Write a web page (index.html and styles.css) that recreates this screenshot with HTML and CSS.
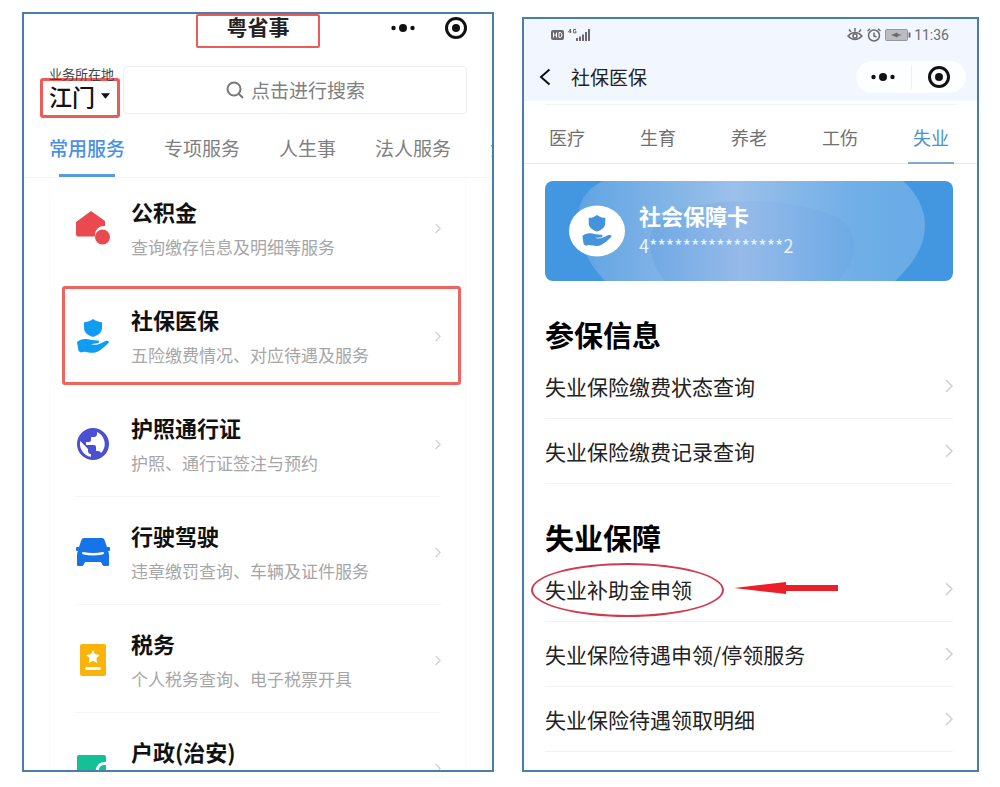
FILE: index.html
```html
<!DOCTYPE html>
<html lang="zh-CN">
<head>
<meta charset="utf-8">
<meta name="viewport" content="width=device-width, initial-scale=1">
<title>粤省事 - 社保医保</title>
<link rel="stylesheet" href="styles.css">
</head>
<body>
<svg class="defs" aria-hidden="true">
  <symbol id="hand" viewBox="0 0 36 36">
    <path d="M18 1c3 2.200 6 3 9 3.200V10c0 4.500-4 7.500-9 9-5-1.500-9-4.500-9-9V4.200C12 4 15 3.200 18 1z"/>
    <path d="M2 24c3-2.500 6-3.500 9.500-3 4 .6 6.500 1.500 11 1.500 2 0 2 2.300 0 2.800-2.500.6-5 .7-7 .7 3 1 7 .8 10-.6l4.500-2.200c2.500-1 5 .3 3.500 1.900-3.500 3.500-7 6.500-10.500 8.400-3 1.500-6 1.700-9.500.9-3-.7-5-1-7.500.1L3.500 33z"/>
  </symbol>
  <symbol id="chev" viewBox="0 0 8 14"><path d="M1 1l6 6-6 6" fill="none" stroke="currentColor" stroke-width="1.500"/></symbol>
  <symbol id="dots" viewBox="0 0 24 10"><circle cx="2.500" cy="5" r="2.200"/><circle cx="12" cy="5" r="4"/><circle cx="21.500" cy="5" r="2.200"/></symbol>
  <symbol id="target" viewBox="0 0 24 24"><circle cx="12" cy="12" r="9.500" fill="none" stroke="currentColor" stroke-width="3"/><circle cx="12" cy="12" r="4"/></symbol>
</svg>

<main class="board">
  <section class="phone home">
    <header class="home-head">
      <h1 class="home-title">粤省事</h1>
      <div class="home-capsule">
        <button type="button" aria-label="更多"><svg class="dots"><use href="#dots"/></svg></button>
        <button type="button" aria-label="关闭"><svg class="target"><use href="#target"/></svg></button>
      </div>
    </header>
    <div class="search-row">
      <div class="place">
        <span class="place-label" id="place-label">业务所在地</span>
        <button type="button" class="place-btn" aria-describedby="place-label">江门<svg class="caret" viewBox="0 0 10 6"><path d="M0 0h10L5 6z"/></svg></button>
      </div>
      <label class="search">
        <svg class="search-icon" viewBox="0 0 18 18"><circle cx="8" cy="8" r="6.500"/><path d="M12.500 12.500L17 17"/></svg>
        <input type="search" placeholder="点击进行搜索" aria-label="搜索">
      </label>
    </div>
    <nav class="home-tabs">
      <a href="#" class="on">常用服务</a>
      <a href="#">专项服务</a>
      <a href="#">人生事</a>
      <a href="#">法人服务</a>
      <a href="#">法</a>
    </nav>
    <ul class="services">
      <li><a href="#" class="service">
        <svg class="icon red" viewBox="0 0 36 36"><path d="M16 1l14 10v5a9 9 0 0 0-10 10.500H3a2 2 0 0 1-2-2V12z"/><circle cx="27.500" cy="27" r="7.500"/></svg>
        <span class="service-text"><strong>公积金</strong><small>查询缴存信息及明细等服务</small></span>
        <svg class="chev"><use href="#chev"/></svg></a></li>
      <li class="marked"><a href="#" class="service">
        <svg class="icon sky"><use href="#hand"/></svg>
        <span class="service-text"><strong>社保医保</strong><small>五险缴费情况、对应待遇及服务</small></span>
        <svg class="chev"><use href="#chev"/></svg></a></li>
      <li><a href="#" class="service">
        <svg class="icon violet" viewBox="0 0 36 36"><path fill-rule="evenodd" d="M18 2a16 16 0 1 0 0 32 16 16 0 0 0 0-32zM22 6v2a3 3 0 0 1-3 3h-3v3a2 2 0 0 1-2 2h-3v3h8a2 2 0 0 1 2 2v4h2a3 3 0 0 1 3 2A13 13 0 0 0 22 6zM5.300 15A13 13 0 0 0 16 30.800V28a3 3 0 0 1-3-3v-2z"/></svg>
        <span class="service-text"><strong>护照通行证</strong><small>护照、通行证签注与预约</small></span>
        <svg class="chev"><use href="#chev"/></svg></a></li>
      <li><a href="#" class="service">
        <svg class="icon blue" viewBox="0 0 36 36"><path fill-rule="evenodd" d="M9 4h18q2 0 2.600 2L32 13h2q1 0 1 1v2q0 1-1 1h-1q1 1.500 1 4v10q0 1-1 1h-4q-1 0-1.500-1L26 28H10l-1.500 3q-.5 1-1.500 1H3q-1 0-1-1V21q0-2.500 1-4H2q-1 0-1-1v-2q0-1 1-1h2l2.400-7Q7 4 9 4zM8 18q-1 0-1 1t1.500 1.500q9.500 2 19 0Q29 20 29 19t-1-1q-10 2-20 0z"/></svg>
        <span class="service-text"><strong>行驶驾驶</strong><small>违章缴罚查询、车辆及证件服务</small></span>
        <svg class="chev"><use href="#chev"/></svg></a></li>
      <li><a href="#" class="service">
        <svg class="icon amber" viewBox="0 0 36 36"><rect x="5" y="2" width="26" height="32" rx="2"/><path class="cut" d="M18 8l2.100 4.300 4.700.7-3.400 3.300.8 4.700-4.200-2.200-4.200 2.200.8-4.700-3.400-3.300 4.700-.7zM10.500 25h15v3h-15z"/></svg>
        <span class="service-text"><strong>税务</strong><small>个人税务查询、电子税票开具</small></span>
        <svg class="chev"><use href="#chev"/></svg></a></li>
      <li><a href="#" class="service">
        <svg class="icon green" viewBox="0 0 36 36"><rect x="2" y="5" width="29" height="28" rx="2"/><path class="ring" d="M31 13.500q-8-1-9 8"/></svg>
        <span class="service-text"><strong>户政(治安)</strong></span>
        <svg class="chev"><use href="#chev"/></svg></a></li>
    </ul>
  </section>

  <section class="phone social">
    <header class="social-head">
      <div class="status">
        <svg class="status-left" viewBox="0 0 42 14"><rect x="0" y="2" width="13" height="10" rx="2"/><path class="hd" d="M2.500 4.500v5M5.500 4.500v5M2.500 7h3M8 4.500v5h1q2 0 2-2.500t-2-2.500z"/><path class="net" d="M19.500 5V1l-2 3h3M25 1.500h-2.500v3.300H25V3.200h-1"/><path d="M25 10h2v3h-2zM28 8.500h2V13h-2zM31 6.500h2V13h-2zM34 4h2v9h-2zM37 1h2v12h-2z"/></svg>
        <div class="status-right">
          <svg class="glyph" viewBox="0 0 16 14"><path d="M1 8q7-7 14 0-7 7-14 0zM8 3.500V0M4 4L2 1.500M12 4l2-2.500"/><circle cx="8" cy="8" r="2"/></svg>
          <svg class="glyph" viewBox="0 0 16 14"><circle cx="8" cy="7.500" r="5.500"/><path d="M8 4.500v3.500l2.500 1M1.500 3L4 .8M14.500 3L12 .8"/></svg>
          <svg class="battery" viewBox="0 0 26 12"><rect x=".5" y=".5" width="22" height="11" rx="1"/><path d="M23.500 3.500h2v5h-2zM6 6l4-1.500 2-1 1 1.500 4 1-4 1-1 1.500-2-1z"/></svg>
          <time>11:36</time>
        </div>
      </div>
      <div class="nav">
        <button type="button" class="back" aria-label="返回"><svg viewBox="0 0 12 18"><path d="M10.500 1.500L2 9l8.500 7.500"/></svg></button>
        <h2 class="nav-title">社保医保</h2>
        <div class="capsule">
          <button type="button" aria-label="更多"><svg class="dots"><use href="#dots"/></svg></button>
          <button type="button" aria-label="关闭"><svg class="target"><use href="#target"/></svg></button>
        </div>
      </div>
    </header>
    <nav class="social-tabs">
      <a href="#">医疗</a>
      <a href="#">生育</a>
      <a href="#">养老</a>
      <a href="#">工伤</a>
      <a href="#" class="on">失业</a>
    </nav>
    <div class="content">
      <article class="card">
        <svg class="card-bg" viewBox="0 0 408 100" preserveAspectRatio="none" aria-hidden="true">
          <defs>
            <linearGradient id="g1"><stop offset="0" stop-color="#60a4e2"/><stop offset=".45" stop-color="#9bc0ea"/><stop offset=".8" stop-color="#70aee7"/><stop offset="1" stop-color="#68abe6"/></linearGradient>
            <linearGradient id="g2"><stop offset="0" stop-color="#70a9e4"/><stop offset=".45" stop-color="#96bae9"/><stop offset="1" stop-color="#6caae5"/></linearGradient>
          </defs>
          <path fill="url(#g1)" d="M58 0Q33 12 33 38q0 34 27 62h290q30-28 30-55 0-25-22-45z"/>
          <path fill="url(#g2)" d="M120 100Q105 82 105 60q0-22 30-32 35-8 70-8 45 0 80 13 24 9 24 32 0 19-16 35z"/>
        </svg>
        <svg class="badge" viewBox="0 0 56 52"><ellipse cx="28" cy="26" rx="28" ry="25.500" fill="#fff"/><use href="#hand" x="10" y="9" width="36" height="33"/></svg>
        <div class="card-text"><h3>社会保障卡</h3><p>4****************2</p></div>
      </article>
      <h3 class="group">参保信息</h3>
      <ul class="links">
        <li><a href="#">失业保险缴费状态查询<svg class="chev"><use href="#chev"/></svg></a></li>
        <li><a href="#">失业保险缴费记录查询<svg class="chev"><use href="#chev"/></svg></a></li>
      </ul>
      <h3 class="group">失业保障</h3>
      <ul class="links">
        <li class="circled"><a href="#">失业补助金申领<svg class="chev"><use href="#chev"/></svg></a>
          <svg class="arrow" viewBox="0 0 104 12" aria-hidden="true"><path d="M0 6L52 0v3h52v6H52v3z"/></svg></li>
        <li><a href="#">失业保险待遇申领/停领服务<svg class="chev"><use href="#chev"/></svg></a></li>
        <li><a href="#">失业保险待遇领取明细<svg class="chev"><use href="#chev"/></svg></a></li>
      </ul>
    </div>
  </section>
</main>
</body>
</html>
```
FILE: styles.css
```css
*, *::before, *::after { box-sizing: border-box; margin: 0; padding: 0; }
body {
  font-family: "Noto Sans CJK SC", sans-serif;
  background: #fff;
  color: #111;
}
a { color: inherit; text-decoration: none; }
ul { list-style: none; }
button { border: 0; background: none; font: inherit; color: inherit; cursor: pointer; }
svg { display: block; flex: none; fill: currentColor; }
.defs { position: absolute; width: 0; height: 0; }

.board {
  display: grid;
  grid-template-columns: 472fr 457fr;
  gap: 28px;
  height: 100vh;
  padding: 12px 21px 15px 22px;
}
.phone {
  min-width: 0;
  border: 2px solid #4a7cac;
  overflow: hidden;
}
.dots { width: 24px; height: 10px; }
.target { width: 24px; height: 24px; }
.chev { width: 8px; height: 14px; color: #cfcfcf; }

/* Home screen */
.home-head {
  display: grid;
  grid-template-columns: 1fr auto 1fr;
  margin-bottom: 18px;
}
.home-title {
  grid-column: 2;
  width: 124px;
  height: 34px;
  border: 2px solid #ee5a56;
  border-radius: 2px;
  font-size: 21px;
  line-height: 20px;
  text-align: center;
  color: #222;
}
.home-capsule {
  justify-self: end;
  display: flex;
  align-items: center;
  gap: 29px;
  height: 27px;
  margin-right: 24px;
}
.search-row {
  display: flex;
  align-items: flex-start;
  gap: 3px;
  padding: 0 25px 0 16px;
}
.place { width: 80px; }
.place-label {
  display: block;
  height: 12px;
  padding-left: 9px;
  font-size: 13px;
  line-height: 16px;
  white-space: nowrap;
  color: #444;
}
.place-btn {
  display: flex;
  align-items: center;
  gap: 6px;
  width: 100%;
  height: 40px;
  padding: 0 0 4px 6px;
  border: 3px solid #ee5a56;
  border-radius: 3px;
  font-size: 23px;
  font-weight: 500;
  line-height: 30px;
}
.caret { width: 9px; height: 6px; }
.search {
  flex: 1;
  display: flex;
  align-items: center;
  gap: 7px;
  min-width: 0;
  height: 48px;
  padding-left: 102px;
  border: 1px solid #ededed;
  border-radius: 4px;
}
.search-icon { width: 18px; height: 18px; fill: none; stroke: #777; stroke-width: 2; }
.search input {
  flex: 1;
  min-width: 0;
  border: 0;
  outline: 0;
  background: none;
  font: inherit;
  font-size: 19px;
  line-height: 28px;
}
.search input::placeholder { color: #808080; opacity: 1; }

.home-tabs {
  display: flex;
  gap: 39px;
  padding-left: 25px;
  border-bottom: 1px solid #f5f5f5;
  overflow: hidden;
  font-size: 19px;
  line-height: 59px;
  white-space: nowrap;
  color: #808080;
}
.home-tabs a { flex: none; position: relative; }
.home-tabs .on { color: #4a90e6; font-weight: 500; }
.home-tabs .on::after {
  content: "";
  position: absolute;
  left: 10px;
  right: 10px;
  bottom: 0;
  height: 3px;
  background: #5a9ae4;
}

.services {
  margin: 0 26px;
  padding: 0 24px;
  border: 0 solid #fafafa;
  border-width: 0 1px;
}
.services li { position: relative; }
.service {
  display: flex;
  align-items: center;
  gap: 20px;
  padding: 24px 0 21px;
  border-bottom: 1px solid #f5f5f5;
}
.services li:first-child .service { padding-top: 19px; }
.services li:first-child .service,
.marked .service { border-color: transparent; }
.marked::after {
  content: "";
  position: absolute;
  inset: 5px -20px 4px -13px;
  border: 3px solid #ee6461;
  border-radius: 3px;
  pointer-events: none;
}
.service-text { flex: 1; min-height: 62px; white-space: nowrap; }
.service-text strong { display: block; font-size: 22px; line-height: 28px; }
.service-text small { display: block; margin-top: 10px; font-size: 17px; line-height: 24px; color: #a6a6a6; }
.icon { width: 36px; height: 36px; }
.red { color: #e9494f; }
.sky { color: #109cf0; }
.violet { color: #4a4fd4; }
.blue { color: #1674e8; }
.amber { color: #fab30a; }
.green { color: #14c197; }
.cut { fill: #fff; }
.ring { fill: none; stroke: #fff; stroke-width: 3; }
.services .chev { width: 6px; height: 11px; }

/* Social insurance screen */
.social { margin-top: 5px; }
.social-head { height: 82px; background: #f2f7ff; }
.status {
  display: flex;
  justify-content: space-between;
  align-items: center;
  height: 32px;
  padding: 0 28px 0 27px;
  color: #6a6a6e;
}
.status-left { width: 42px; height: 14px; }
.hd, .net { fill: none; stroke: #fff; }
.net { stroke: currentColor; }
.status-right { display: flex; align-items: center; gap: 3px; }
.glyph { width: 16px; height: 14px; fill: none; stroke: currentColor; stroke-width: 1.5; }
.battery { width: 26px; height: 12px; }
.battery rect { fill: #bbbcc0; stroke: #98999d; }
.status time { font: 14px/20px Roboto, sans-serif; }
.nav { display: flex; align-items: center; height: 52px; padding: 0 11px 0 15px; }
.back { width: 12px; margin-right: 20px; }
.back svg { width: 12px; height: 18px; fill: none; stroke: #111; stroke-width: 2; }
.nav-title { flex: 1; font-size: 19px; font-weight: 400; line-height: 28px; color: #222; }
.capsule {
  display: flex;
  align-items: center;
  height: 32px;
  width: 110px;
  border-radius: 16px;
  background: #fcfeff;
}
.capsule button { flex: 1; display: grid; place-items: center; }
.capsule button + button { border-left: 1px solid #eef2f5; }

.social-tabs {
  display: flex;
  justify-content: space-between;
  margin-top: 3px;
  padding: 0 23px 0 20px;
  border-bottom: 1px solid #e6e8ea;
  font-size: 18px;
  text-align: center;
  color: #707070;
  background: linear-gradient(#f3f3f3, #f3f3f3) center top / calc(100% - 42px) 1px no-repeat;
}
.social-tabs a { width: 46px; padding: 10px 0 1px; line-height: 47px; }
.social-tabs .on { margin-bottom: -1px; border-bottom: 2px solid #7fa9cc; color: #4b93c4; }

.content { padding: 17px 24px 0 21px; }
.card {
  position: relative;
  display: flex;
  align-items: center;
  gap: 14px;
  height: 100px;
  padding-left: 24px;
  border-radius: 8px;
  overflow: hidden;
  background: #4297e0;
}
.card-bg { position: absolute; inset: 0; width: 100%; height: 100%; }
.badge { position: relative; width: 56px; height: 52px; color: #4593dc; }
.card-text { position: relative; padding-bottom: 2px; color: #fff; }
.card-text h3 { font-size: 22px; line-height: 30px; }
.card-text p { font-size: 18px; line-height: 30px; color: #e6f3ff; }
.group { margin-top: 35px; font-size: 29px; line-height: 36px; color: #000; }
.links { padding-top: 2px; }
.links li { position: relative; }
.links a {
  display: flex;
  align-items: center;
  justify-content: space-between;
  height: 65px;
  border-bottom: 1px solid #f1f1f1;
  font-size: 21px;
  white-space: nowrap;
  color: #222;
}
.circled::before {
  content: "";
  position: absolute;
  left: -14px;
  top: 6px;
  width: 193px;
  height: 54px;
  border: 2px solid #cf3a50;
  border-radius: 50%;
  pointer-events: none;
}
.arrow { position: absolute; left: 189px; top: 25px; width: 104px; height: 12px; color: #ea1f27; }
```
